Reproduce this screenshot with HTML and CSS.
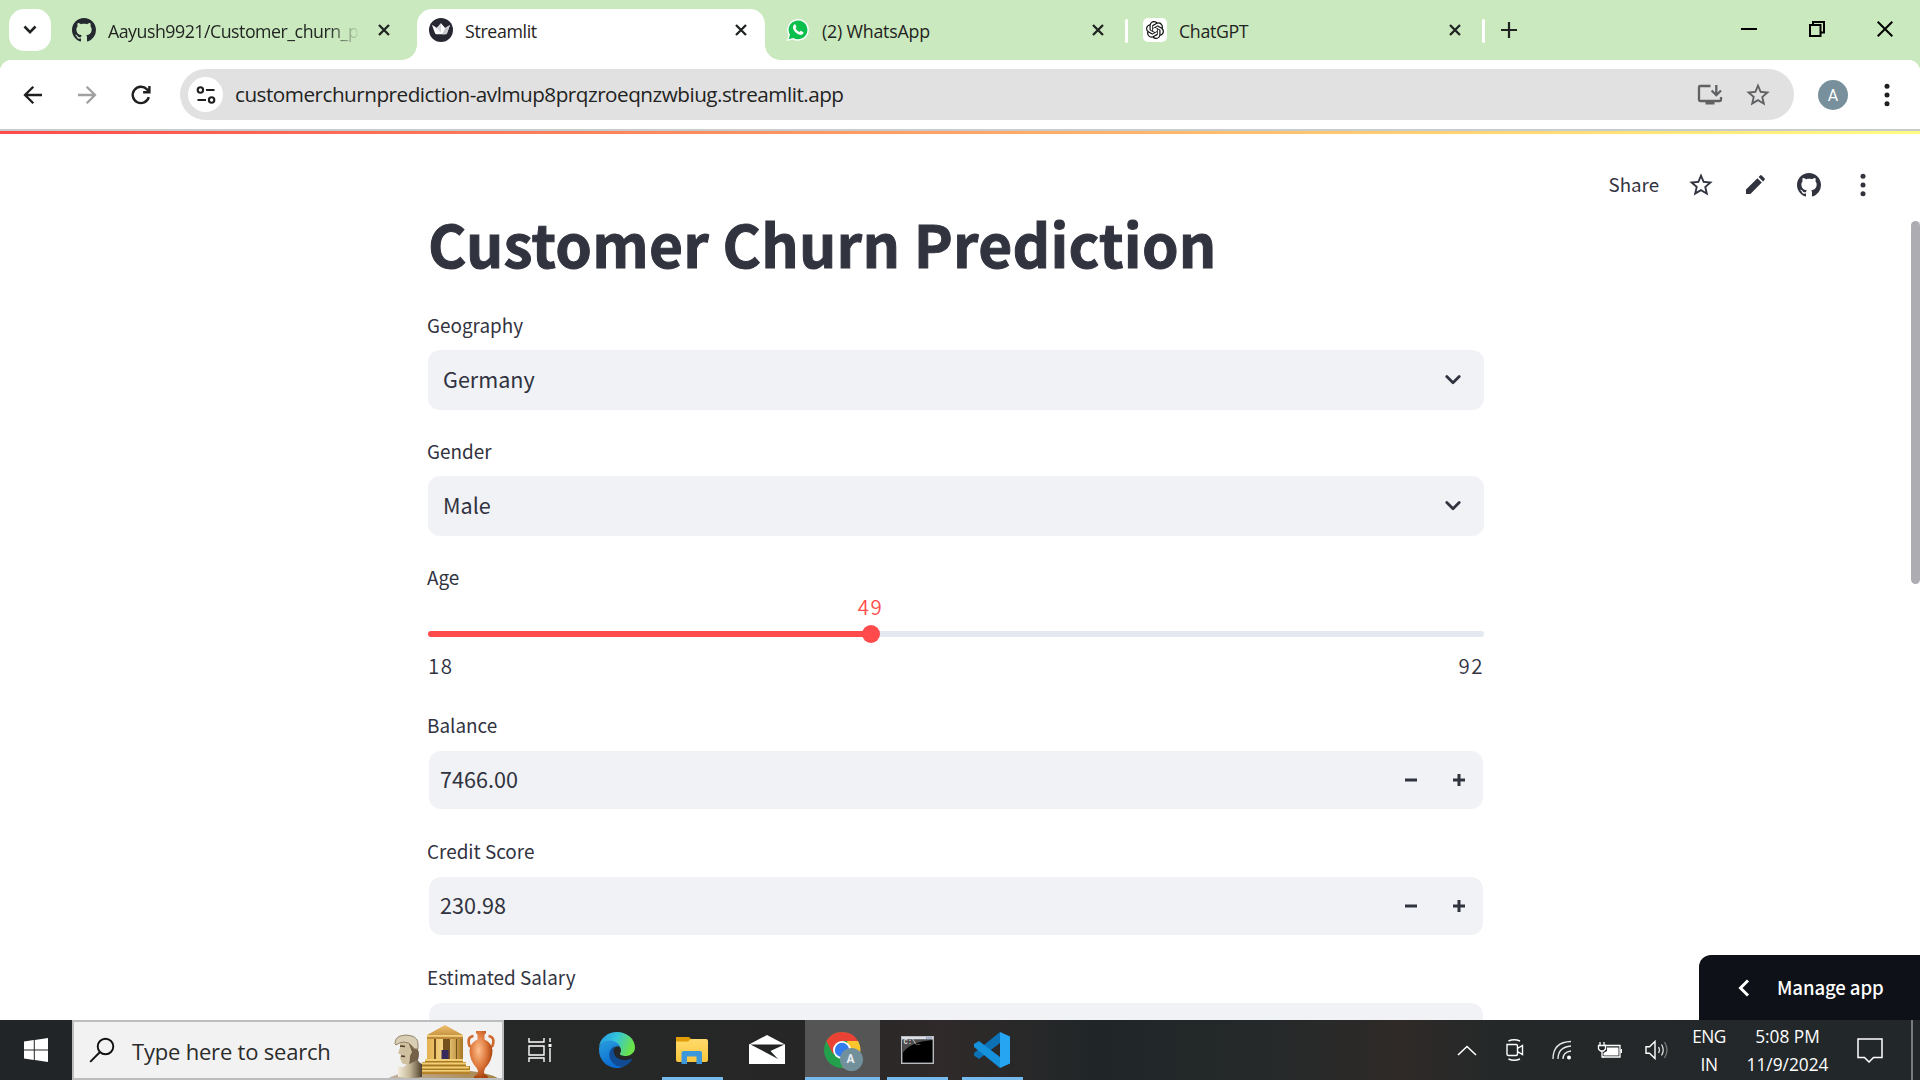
FILE: index.html
```html
<!DOCTYPE html>
<html lang="en">
<head>
<meta charset="utf-8">
<title>Streamlit</title>
<link rel="stylesheet" href="styles.css">
</head>
<body>
<svg class="defs" width="0" height="0">
  <defs>
    <symbol id="github" viewBox="0 0 16 16"><path d="M8 0C3.58 0 0 3.58 0 8c0 3.54 2.29 6.53 5.47 7.59.4.07.55-.17.55-.38 0-.19-.01-.82-.01-1.49-2.01.37-2.53-.49-2.69-.94-.09-.23-.48-.94-.82-1.13-.28-.15-.68-.52-.01-.53.63-.01 1.08.58 1.23.82.72 1.21 1.87.87 2.33.66.07-.52.28-.87.51-1.07-1.78-.2-3.64-.89-3.64-3.95 0-.87.31-1.59.82-2.15-.08-.2-.36-1.02.08-2.12 0 0 .67-.21 2.2.82.64-.18 1.32-.27 2-.27.68 0 1.36.09 2 .27 1.53-1.04 2.2-.82 2.2-.82.44 1.1.16 1.92.08 2.12.51.56.82 1.27.82 2.15 0 3.07-1.87 3.75-3.65 3.95.29.25.54.73.54 1.48 0 1.07-.01 1.93-.01 2.2 0 .21.15.46.55.38A8.013 8.013 0 0016 8c0-4.42-3.58-8-8-8z"/></symbol>
    <symbol id="close" viewBox="0 0 12 12"><path d="M1 1l10 10M11 1L1 11" fill="none" stroke="#1f2321" stroke-width="2.3"/></symbol>
    <symbol id="star" viewBox="0 0 24 24"><path d="M22 9.24l-7.19-.62L12 2 9.19 8.63 2 9.24l5.46 4.73L5.82 21 12 17.27 18.18 21l-1.63-7.03L22 9.24zM12 15.4l-3.76 2.27 1-4.28-3.32-2.88 4.38-.38L12 6.1l1.71 4.04 4.38.38-3.32 2.88 1 4.28L12 15.4z"/></symbol>
    <symbol id="dots" viewBox="0 0 6 24"><circle cx="3" cy="3.2" r="2.5"/><circle cx="3" cy="12" r="2.5"/><circle cx="3" cy="20.8" r="2.5"/></symbol>
    <symbol id="chev" viewBox="0 0 16 10"><path d="M1.8 1.6L8 7.8l6.2-6.2" fill="none" stroke="#31333f" stroke-width="2.8" stroke-linecap="round" stroke-linejoin="round"/></symbol>
  </defs>
</svg>

<div class="tabstrip">
  <div class="tab-search"><svg width="14" height="10" viewBox="0 0 14 10"><path d="M1.5 1.5L7 7.2l5.5-5.7" fill="none" stroke="#1f2321" stroke-width="2.6"/></svg></div>
  <div class="tab tab-github">
    <svg class="fav" fill="#24292f"><use href="#github"/></svg>
    <span class="tab-title faded">Aayush9921/Customer_churn_p</span>
    <svg class="x"><use href="#close"/></svg>
  </div>
  <div class="tab active">
    <svg class="fav" viewBox="0 0 24 24"><circle cx="12" cy="12" r="12" fill="#262730"/><path d="M3 7l4.8 3L12 5.2l4.2 4.8L21 7l-3 8.2q-.4 1-1.500 1h-9q-1.100 0-1.500-1z" fill="#fff"/><path d="M12 5.200l-4.200 4.800 4.200 5z" fill="#d5d5da"/><path d="M3 7l4.800 3 3 6.200z" fill="#ececf0"/><path d="M21 7l-4.800 3-3.200 6.200h3.500q1 0 1.500-1z" fill="#c9c9cf"/></svg>
    <span class="tab-title">Streamlit</span>
    <svg class="x"><use href="#close"/></svg>
  </div>
  <div class="tab">
    <svg class="fav" viewBox="0 0 24 24"><path d="M1 23l1.600-5.900A10.800 10.800 0 1 1 7 21.400z" fill="#fff"/><path d="M2.700 21.300L4 16.800A9.400 9.400 0 1 1 7.300 20z" fill="#0bbf4c"/><path d="M8.300 6.600c.5-.4 1-.3 1.200.2l.9 2c.1.400 0 .6-.8 1.500.9 1.800 2.100 2.900 4 3.700.9-1.200 1.100-1.300 1.500-1.100l2 1c.4.200.4.400.3 1-.3 1.400-1.800 2.100-3.200 1.900-3.800-.6-7-4.100-7.200-7-.1-1.300.4-2.400 1.300-3.200z" fill="#fff"/></svg>
    <span class="tab-title">(2) WhatsApp</span>
    <svg class="x"><use href="#close"/></svg>
  </div>
  <i class="sep"></i>
  <div class="tab tab-gpt">
    <svg class="fav" viewBox="0 0 24 24"><rect width="24" height="24" rx="5" fill="#fff"/><path transform="translate(3 3) scale(.75)" fill="#111" d="M22.2819 9.8211a5.9847 5.9847 0 0 0-.5157-4.9108 6.0462 6.0462 0 0 0-6.5098-2.9A6.0651 6.0651 0 0 0 4.9807 4.1818a5.9847 5.9847 0 0 0-3.9977 2.9 6.0462 6.0462 0 0 0 .7427 7.0966 5.98 5.98 0 0 0 .511 4.9107 6.051 6.051 0 0 0 6.5146 2.9001A5.9847 5.9847 0 0 0 13.2599 24a6.0557 6.0557 0 0 0 5.7718-4.2058 5.9894 5.9894 0 0 0 3.9977-2.9001 6.0557 6.0557 0 0 0-.7475-7.0729zm-9.022 12.6081a4.4755 4.4755 0 0 1-2.8764-1.0408l.1419-.0804 4.7783-2.7582a.7948.7948 0 0 0 .3927-.6813v-6.7369l2.02 1.1686a.071.071 0 0 1 .038.052v5.5826a4.504 4.504 0 0 1-4.4945 4.4944zm-9.6607-4.1254a4.4708 4.4708 0 0 1-.5346-3.0137l.142.0852 4.783 2.7582a.7712.7712 0 0 0 .7806 0l5.8428-3.3685v2.3324a.0804.0804 0 0 1-.0332.0615L9.74 19.9502a4.4992 4.4992 0 0 1-6.1408-1.6464zM2.3408 7.8956a4.485 4.485 0 0 1 2.3655-1.9728V11.6a.7664.7664 0 0 0 .3879.6765l5.8144 3.3543-2.0201 1.1685a.0757.0757 0 0 1-.071 0l-4.8303-2.7865A4.504 4.504 0 0 1 2.3408 7.872zm16.5963 3.8558L13.1038 8.364 15.1192 7.2a.0757.0757 0 0 1 .071 0l4.8303 2.7913a4.4944 4.4944 0 0 1-.6765 8.1042v-5.6772a.79.79 0 0 0-.407-.667zm2.0107-3.0231l-.142-.0852-4.7735-2.7818a.7759.7759 0 0 0-.7854 0L9.409 9.2297V6.8974a.0662.0662 0 0 1 .0284-.0615l4.8303-2.7866a4.4992 4.4992 0 0 1 6.6802 4.66zM8.3065 12.863l-2.02-1.1638a.0804.0804 0 0 1-.038-.0567V6.0742a4.4992 4.4992 0 0 1 7.3757-3.4537l-.142.0805L8.704 5.459a.7948.7948 0 0 0-.3927.6813zm1.0976-2.3654l2.602-1.4998 2.6069 1.4998v2.9994l-2.5974 1.4997-2.6067-1.4997Z"/></svg>
    <span class="tab-title">ChatGPT</span>
    <svg class="x"><use href="#close"/></svg>
  </div>
  <i class="sep"></i>
  <svg class="new-tab" width="16" height="16" viewBox="0 0 16 16"><path d="M8 0v16M0 8h16" stroke="#1f2321" stroke-width="2.200"/></svg>
  <div class="win-controls">
    <svg width="16" height="16" viewBox="0 0 16 16"><path d="M0 8h16" stroke="#000" stroke-width="2"/></svg>
    <svg width="16" height="16" viewBox="0 0 16 16"><path d="M1 4h10.500v11H1zM4 4V1h11v10.500h-3.500" fill="none" stroke="#000" stroke-width="2"/></svg>
    <svg width="16" height="16" viewBox="0 0 16 16"><path d="M.7.700l14.600 14.600M15.300.700L.7 15.300" stroke="#000" stroke-width="2"/></svg>
  </div>
</div>

<div class="toolbar">
  <svg class="nav" width="24" height="24" viewBox="0 0 24 24"><path d="M21 12H4.500M12.300 3.700L4 12l8.300 8.300" fill="none" stroke="#1f1f1f" stroke-width="2.300"/></svg>
  <svg class="nav" width="24" height="24" viewBox="0 0 24 24"><path d="M3 12h16.500M11.700 3.700L20 12l-8.300 8.300" fill="none" stroke="#a0a0a0" stroke-width="2.300"/></svg>
  <svg class="nav" width="24" height="24" viewBox="0 0 24 24"><path d="M19.800 14.200A8.200 8.200 0 1 1 18 6.400L20.300 8.700M20.400 3v6.300h-6.300" fill="none" stroke="#1f1f1f" stroke-width="2.400"/></svg>
  <div class="omnibox">
    <div class="site-info"><svg width="20" height="18" viewBox="0 0 20 18"><g fill="none" stroke="#1f1f1f" stroke-width="2.100"><circle cx="4.400" cy="4" r="2.700"/><path d="M10 4h8.500M1.500 14H10"/><circle cx="15.600" cy="14" r="2.700"/></g></svg></div>
    <span class="url">customerchurnprediction-avlmup8prqzroeqnzwbiug.streamlit.app</span>
    <svg class="install" width="26" height="24" viewBox="0 0 26 24"><path d="M13.500 3H3.200q-1.200 0-1.200 1.200v12.600q0 1.200 1.200 1.200h19.600q1.200 0 1.200-1.200V14" fill="none" stroke="#5f6163" stroke-width="2.300"/><path d="M8.500 18h9v3.500h-9z" fill="#5f6163"/><path d="M19.300 2v9.500M14.600 7.500l4.700 4.700L24 7.500" fill="none" stroke="#5f6163" stroke-width="2.300"/></svg>
    <svg class="bookmark" fill="#5f6163"><use href="#star"/></svg>
  </div>
  <div class="avatar">A</div>
  <svg class="menu" fill="#1f1f1f"><use href="#dots"/></svg>
</div>
<div class="decoration"></div>

<div class="page">
  <div class="app-header">
    <span class="share">Share</span>
    <svg class="h-star" fill="#31333f"><use href="#star"/></svg>
    <svg class="h-pencil" width="22" height="22" viewBox="0 0 22 22" fill="#31333f"><path d="M2 15.600L13.400 4.200l4.400 4.400L6.400 20H2zM14.600 3l1.500-1.500q.8-.8 1.600 0l2.800 2.800q.8.800 0 1.600L19 7.400z"/></svg>
    <svg class="h-github" fill="#31333f"><use href="#github"/></svg>
    <svg class="h-dots" fill="#31333f"><use href="#dots"/></svg>
  </div>
  <main class="form">
    <h1>Customer Churn Prediction</h1>
    <div class="field"><label>Geography</label><div class="select"><span>Germany</span><svg class="chev"><use href="#chev"/></svg></div></div>
    <div class="field"><label>Gender</label><div class="select"><span>Male</span><svg class="chev"><use href="#chev"/></svg></div></div>
    <div class="field slider">
      <label>Age</label>
      <div class="slider-value"><span>49</span></div>
      <div class="track"><i class="fill"></i><i class="thumb"></i></div>
      <div class="range"><span>18</span><span>92</span></div>
    </div>
    <div class="field"><label>Balance</label><div class="number"><span>7466.00</span><svg class="step" viewBox="0 0 12 12"><path d="M0 6h12"/></svg><svg class="step" viewBox="0 0 12 12"><path d="M0 6h12M6 0v12"/></svg></div></div>
    <div class="field"><label>Credit Score</label><div class="number"><span>230.98</span><svg class="step" viewBox="0 0 12 12"><path d="M0 6h12"/></svg><svg class="step" viewBox="0 0 12 12"><path d="M0 6h12M6 0v12"/></svg></div></div>
    <div class="field"><label>Estimated Salary</label><div class="number"></div></div>
  </main>
  <div class="scroll-thumb"></div>
  <div class="manage"><svg width="12" height="18" viewBox="0 0 12 18"><path d="M10 1.500L2.500 9l7.500 7.500" fill="none" stroke="#fff" stroke-width="3"/></svg><span>Manage app</span></div>
</div>

<div class="taskbar">
  <div class="start"><svg width="24" height="24" viewBox="0 0 24 24" fill="#fff"><path d="M0 3.400L9.800 2v9.400H0zM10.800 1.900L24 0v11.400H10.800zM0 12.400h9.800V22L0 20.600zM10.800 12.400H24V24l-13.200-1.900z"/></svg></div>
  <div class="search">
    <svg class="lens" width="26" height="26" viewBox="0 0 26 26"><circle cx="16.500" cy="9.500" r="7.800" fill="none" stroke="#111" stroke-width="1.900"/><path d="M11 15L1.200 24.800" stroke="#111" stroke-width="1.900"/></svg>
    <span>Type here to search</span>
    <svg class="art" width="118" height="56" viewBox="0 0 118 56">
      <defs>
        <linearGradient id="gold" x2="1"><stop offset="0" stop-color="#e2b04f"/><stop offset=".5" stop-color="#f6d88c"/><stop offset="1" stop-color="#a87723"/></linearGradient>
        <linearGradient id="roof" x2="0" y2="1"><stop offset="0" stop-color="#efc06c"/><stop offset="1" stop-color="#b98534"/></linearGradient>
        <linearGradient id="hill" x2="1"><stop offset="0" stop-color="#c5b5a8"/><stop offset="1" stop-color="#a5803f"/></linearGradient>
        <linearGradient id="stone" x2="1"><stop offset="0" stop-color="#f3ecd9"/><stop offset=".5" stop-color="#c3b596"/><stop offset="1" stop-color="#50402e"/></linearGradient>
        <radialGradient id="clay" cx=".4" cy=".4" r=".6"><stop offset="0" stop-color="#ffc090"/><stop offset=".6" stop-color="#dc7538"/><stop offset="1" stop-color="#a8430f"/></radialGradient>
      </defs>
      <path d="M0 56Q14 45 57 44Q106 45 118 56z" fill="url(#hill)"/>
      <path d="M36 45v-4h2v-4h3v-3h38v3h3v4h4v4z" fill="#a87923"/>
      <path d="M41 34h38v2H41zM38 37.500h44v2H38zM36 41.500h49v2H36zM34 45h52v1.800H34z" fill="#f2cf75"/>
      <path d="M34 46.800h52v2.400H34z" fill="#b98429"/>
      <path d="M44 12h34v22H44z" fill="#74501d"/>
      <path d="M43 12h7v22h-7zM52 12h7v22h-7zM66 12h6v22h-6zM73 12h6v22h-6z" fill="url(#gold)"/>
      <path d="M57.500 25h7v9h-7z" fill="#382a5b"/>
      <path d="M61 0L43 10v4h36v-4z" fill="url(#roof)"/><path d="M43 10h36v1.800H43z" fill="#f3ce7b"/>
      <path d="M14 41q7 3 9-3l10-7q0 6 5 8v13q-12 2-24 0z" fill="url(#stone)"/>
      <path d="M16 16h12l5 6v9l-7 6q-4 4-8 1l-2-5 1-3-3-2 2-5z" fill="#cfc0a0"/>
      <path d="M25 19l7-3 2 9q2 3 0 10l-9 4q1-3 1-8l2-4z" fill="#75614a"/>
      <path d="M11 19q0-6 5-8 6-2 12 0 6 2 6 8v5q-4 1-6-3-3-4-8-4-4 0-8 3z" fill="#d9cdb3" stroke="#8c7b5f" stroke-width=".9"/>
      <path d="M16 21l5 .5M17 31l4 .500" stroke="#4d3b27" stroke-width="1.500" fill="none"/>
      <path d="M89.500 11q-7 1-4 10l5 3M104.500 11q7 1 4 10l-5 3" fill="none" stroke="#cf6a31" stroke-width="2.600"/>
      <path d="M92 6h10v2.200l-1.500 1.300v5q7 3 8 11 0 10-7.500 18-1 2-1 5l4 3v2.500H90V51.500l4-3q0-3-1-5-7.500-8-7.500-18 1-8 8-11v-5L92 8.200z" fill="url(#clay)"/>
    </svg>
  </div>
  <div class="task view"><svg width="26" height="26" viewBox="0 0 26 26"><path d="M2 1v4h15V1M2 25v-4h15v4M2 9h15v9H2zM23 1v4M23 11v14" fill="none" stroke="#fff" stroke-width="1.400"/><path d="M21.500 7h3v3h-3z" fill="#fff"/></svg></div>
  <div class="task"><svg width="36" height="36" viewBox="0 0 36 36">
    <defs><linearGradient id="e1" x2="1" y2=".3"><stop offset="0" stop-color="#2493e2"/><stop offset=".5" stop-color="#33c5dd"/><stop offset="1" stop-color="#6be34b"/></linearGradient><linearGradient id="e2" x2=".4" y2="1"><stop offset="0" stop-color="#2a9edf"/><stop offset="1" stop-color="#0a6bd0"/></linearGradient></defs>
    <path d="M0 15C1 6 9 0 18 0c10 0 18 7 18 15.500C36 21 31 24 27 24c-4 0-6.500-1-6-2.500 2.500-3 .5-8-4.500-10.500C10 8 3 9 0 15z" fill="url(#e1)"/>
    <path d="M0 16C2 10 8 7.500 14 9c4 1 6.500 3.500 7.500 6-4-2-8 1-8.500 5-.5 7 5 14 12 14.500-3 1.500-5 1.500-7 1.500C8 36 0 28 0 18z" fill="url(#e2)"/>
    <path d="M16 14c-4 2-6.500 6-5.500 11 1.500 6 8 11 14 9.500 4-1.500 7-4 8.500-7 .4-1-.5-1-1-.7-6 3-14 1-16.500-4-1.500-3-1-6 .5-8.800z" fill="#114b93"/></svg></div>
  <div class="task open"><svg width="34" height="28" viewBox="0 0 34 28"><defs><linearGradient id="fo" x2="0" y2="1"><stop offset="0" stop-color="#ffda6b"/><stop offset="1" stop-color="#f9c63c"/></linearGradient></defs><path d="M1 1h13l2.500 2.500L14 6H1z" fill="#e09d08"/><path d="M1 5.500h12L16 3h15q2 0 2 2v19q0 2-2 2H3q-2 0-2-2z" fill="url(#fo)"/><path d="M6.500 28V17q0-2 2-2h16.500q2 0 2 2v11h-5.500v-7.500h-9.500V28z" fill="#3c98da"/></svg></div>
  <div class="task"><svg width="36" height="30" viewBox="0 0 36 30"><path d="M18 0l18 9.500V29H0V9.500z" fill="#fff"/><path d="M1.500 9.500h34L21.500 16l7.500 8z" fill="#242625"/></svg></div>
  <div class="task open current"><svg width="40" height="40" viewBox="0 0 40 40"><circle cx="18" cy="18" r="18" fill="#22a04b"/><path d="M18 0a18 18 0 0 1 16 9H18L9 22 2.400 9A18 18 0 0 1 18 0z" fill="#ea4335"/><path d="M34 9a18 18 0 0 1-15.500 27L26 22l-3-13z" fill="#fbc62d"/><circle cx="18" cy="18" r="9" fill="#fff"/><circle cx="18" cy="18" r="7.200" fill="#327cf0"/><circle cx="27.500" cy="27.500" r="11.500" fill="#72909c"/></svg><b>A</b></div>
  <div class="task open"><svg class="cmd" width="33" height="28" viewBox="0 0 33 28"><rect x=".7" y=".7" width="31.600" height="26.600" fill="#000" stroke="#b9bcc0" stroke-width="1.400"/><path d="M1 1h31v2.500H1z" fill="#dcdfe5"/><path d="M25 2h6" stroke="#4a69ad" stroke-width="1.200" stroke-dasharray="1.500 .7"/><path d="M1.500 4h30Q9 6 1.500 17z" fill="#4c4c4c"/></svg><em>C:\_</em></div>
  <div class="task open"><svg width="36" height="36" viewBox="0 0 36 36"><path d="M26 0l10 4.500v27L26 36z" fill="#26a5f2"/><path d="M26 0v11L5 27 0 23.500v-2.500z" fill="#0c72b5"/><path d="M5 9L26 25v11L0 15v-3z" fill="#1691dc"/></svg></div>
  <div class="tray">
    <div><svg width="20" height="11" viewBox="0 0 20 11"><path d="M1 10l9-8.500L19 10" fill="none" stroke="#fff" stroke-width="1.600"/></svg></div>
    <div><svg width="18" height="24" viewBox="0 0 18 24"><path d="M2.500 3Q8 .5 14 3M2.500 21q5.500 2.500 11.500 0M1 6.500h9q1.500 0 1.500 1.500v8q0 1.500-1.500 1.500H2.500Q1 17.500 1 16zM11.500 10.500l5-3v9l-5-3z" fill="none" stroke="#fff" stroke-width="1.400"/></svg></div>
    <div><svg width="20" height="20" viewBox="0 0 20 20"><g fill="none" stroke="#e8e8e8" stroke-width="1.300"><path d="M1 19Q1 2 19 1.500M6 19Q6 7 19 6M11 19q0-7 8-8"/></g><circle cx="17" cy="17.500" r="2" fill="#fff"/></svg></div>
    <div><svg width="26" height="18" viewBox="0 0 26 18"><path d="M8 4.500h15V16H6" fill="none" stroke="#fff" stroke-width="1.300"/><path d="M10 6.500h11.500v8H6.500V12l3.500-2zM23.500 8H25v4h-1.500z" fill="#fff"/><path d="M3 1v3M7 1v3M1.500 4.500h7V8L6.500 10h-3L1.500 8zM5 10v6h2" fill="none" stroke="#fff" stroke-width="1.300"/></svg></div>
    <div><svg width="24" height="20" viewBox="0 0 24 20"><path d="M1 6.800h3.500L10 1.500v17L4.500 13.200H1z" fill="none" stroke="#fff" stroke-width="1.400"/><path d="M13.500 7q2 3 0 6M16.500 4.500q3.500 5.500 0 11" fill="none" stroke="#ddd" stroke-width="1.300"/><path d="M19.500 2q5 8 0 16" fill="none" stroke="#777" stroke-width="1.300"/></svg></div>
    <div class="lang"><span>ENG</span><span>IN</span></div>
    <div class="clock"><span>5:08 PM</span><span>11/9/2024</span></div>
    <div class="notif"><svg width="26" height="26" viewBox="0 0 26 26"><path d="M1 2h24v18.500h-8.500L12 25l-4.500-4.500H1z" fill="none" stroke="#fff" stroke-width="1.500"/></svg></div>
    <i class="peek"></i>
  </div>
</div>
</body>
</html>
```
FILE: styles.css
```css
* { box-sizing: border-box; }
body {
  margin: 0;
  width: 1920px;
  height: 1080px;
  overflow: hidden;
  display: flex;
  flex-direction: column;
  background: #fff;
  font-family: "Open Sans", sans-serif;
  color: #1f2321;
}
.defs { position: absolute; }
svg { flex: none; display: block; }

/* tab strip */
.tabstrip {
  height: 60px;
  flex: none;
  display: flex;
  align-items: flex-start;
  background: #cbe9be;
  padding: 9px 0 0 9px;
}
.tab-search {
  width: 42px;
  height: 42px;
  border-radius: 15px;
  background: #fff;
  display: flex;
  align-items: center;
  justify-content: center;
}
.tab {
  width: 348px;
  height: 51px;
  display: flex;
  align-items: center;
  padding: 0 18px 9px 12px;
}
.tab-github { width: 358px; padding-left: 21px; padding-right: 19px; }
.tab.active {
  position: relative;
  margin-left: 8px;
  background: #fff;
  border-radius: 15px 15px 0 0;
}
.tab.active::before, .tab.active::after {
  content: "";
  position: absolute;
  bottom: 0;
  width: 15px;
  height: 15px;
}
.tab.active::before { left: -15px; background: radial-gradient(circle at 0 0, transparent 14.5px, #fff 15px); }
.tab.active::after { right: -15px; background: radial-gradient(circle at 100% 0, transparent 14.5px, #fff 15px); }
.tab.active + .tab { width: 360px; padding-left: 21px; padding-right: 21px; }
.fav { width: 24px; height: 24px; margin-right: 12px; }
.tab-title {
  flex: 1;
  padding-top: 2px;
  font-size: 17.8px;
  line-height: 26px;
  letter-spacing: -.35px;
  white-space: nowrap;
}
.tab.active + .tab .tab-title { letter-spacing: -.2px; }
.tab .faded {
  margin-right: 18px;
  letter-spacing: -.5px;
  -webkit-mask-image: linear-gradient(90deg, #000 calc(100% - 32px), transparent);
  mask-image: linear-gradient(90deg, #000 calc(100% - 32px), transparent);
}
.x { width: 12px; height: 12px; }
.sep { width: 3px; height: 24px; margin-top: 10px; border-radius: 2px; background: #fff; }
.tab-gpt { width: 354px; padding-left: 15px; padding-right: 21px; }
.new-tab { margin: 13px 0 0 16px; }
.win-controls { margin: 12px 27px 0 auto; display: flex; gap: 52px; }

/* toolbar */
.toolbar {
  height: 71px;
  flex: none;
  display: flex;
  align-items: center;
  padding: 0 29px 0 21px;
  border-bottom: 2px solid #c9cccd;
  background: radial-gradient(circle at 12px 12px, #fff 12px, #cbe9be 12.500px) 0 0 / 12px 12px no-repeat,
    radial-gradient(circle at 0 12px, #fff 12px, #cbe9be 12.500px) 100% 0 / 12px 12px no-repeat, #fff;
}
.nav { margin-right: 30px; }
.omnibox {
  width: 1614px;
  height: 51px;
  margin-left: -3px;
  border-radius: 26px;
  background: #e1e1e1;
  display: flex;
  align-items: center;
  padding: 0 22px 0 8px;
}
.site-info {
  width: 35px;
  height: 35px;
  border-radius: 50%;
  background: #fff;
  display: flex;
  align-items: center;
  justify-content: center;
}
.url { flex: 1; margin: 0 0 2px 12px; font-size: 20.700px; letter-spacing: -.5px; line-height: 30px; }
.install { margin-right: 21px; }
.bookmark { width: 28px; height: 28px; }
.avatar {
  width: 30px;
  height: 30px;
  margin-left: 24px;
  border-radius: 50%;
  background: #78909c;
  color: #fff;
  font: 16px/31px Roboto, sans-serif;
  text-align: center;
}
.menu { width: 6px; height: 24px; margin-left: 36px; }
.decoration { height: 3px; flex: none; background: linear-gradient(90deg, #ff4b4b, #fffd80); }

/* app */
.page {
  position: relative;
  height: 886px;
  flex: none;
  overflow: hidden;
  font-family: "Noto Sans CJK SC", "Noto Sans", sans-serif;
  color: #31333f;
}
.app-header {
  height: 80px;
  padding: 22px 54px 0 0;
  display: flex;
  align-items: center;
  justify-content: flex-end;
}
.share { font-size: 18.700px; line-height: 26px; margin: 0 28px 2px 0; }
.h-star { width: 28px; height: 28px; }
.h-pencil { margin: 0 31px 0 29px; }
.h-github { width: 24px; height: 24px; }
.h-dots { width: 6px; height: 24px; margin-left: 39px; }
.form { width: 1056px; margin-left: 428px; }
h1 {
  margin: -1px 0 39px;
  height: 60px;
  font-size: 58.600px;
  line-height: 60px;
  letter-spacing: .25px;
  font-weight: 700;
  -webkit-text-stroke: 1px #31333f;
  white-space: nowrap;
}
.field { margin-bottom: 28px; }
label { display: block; height: 30px; margin-bottom: 8px; font-size: 18.900px; line-height: 26px; text-indent: -1px; }
.select, .number {
  height: 60px;
  display: flex;
  align-items: center;
  border-radius: 12px;
  background: #f0f2f6;
  font-size: 21.600px;
  line-height: 30px;
}
.select { padding: 0 23px 0 15px; }
.select span, .number span { flex: 1; position: relative; top: -1px; }
.chev { width: 16px; height: 10px; }
.number { height: 58px; margin: 9px 1px 29px; padding: 0 18px 0 11px; }
.step { width: 12px; height: 12px; margin-left: 36px; fill: none; stroke: #31333f; stroke-width: 3; }
.slider { height: 120px; display: flex; flex-direction: column; }
.slider label { margin: 0; }
.slider-value, .range { font-size: 20.500px; font-weight: 350; letter-spacing: 1.500px; line-height: 28px; }
.slider-value { height: 39px; margin-top: -2px; width: 885px; text-align: center; color: #ff4b4b; }
.track { position: relative; height: 6px; border-radius: 3px; background: #e4e8f0; display: flex; }
.fill { width: 442px; border-radius: 3px; background: #ff4b4b; }
.thumb { position: absolute; left: 434px; top: -6px; width: 18px; height: 18px; border-radius: 50%; background: #ff4b4b; }
.range { display: flex; justify-content: space-between; margin-top: 14px; }
.scroll-thumb { position: absolute; right: 0; top: 87px; width: 9px; height: 363px; border-radius: 4.500px; background: #adacb3; }
.manage {
  position: absolute;
  right: 0;
  bottom: 0;
  width: 221px;
  height: 65px;
  border-radius: 12px 0 0 0;
  background: #0e1117;
  color: #fff;
  display: flex;
  align-items: center;
  padding-left: 39px;
  font-size: 18.600px;
}
.manage span { margin: 0 0 2px 27px; white-space: nowrap; font-weight: 500; letter-spacing: -.1px; }

/* taskbar */
.taskbar {
  height: 60px;
  flex: none;
  display: flex;
  background: linear-gradient(90deg, #222527 0, #262827 33%, #252625 42%, #302a2a 49%, #2b2929 52%, #202628 57%, #25292a 66%, #2f2a28 73%, #242829 78%, #22272a 100%);
  color: #fff;
}
.start { width: 72px; display: flex; align-items: center; justify-content: center; }
.search {
  width: 432px;
  border: 2px solid #bcbdbe;
  background: #f2f2f2;
  color: #2b2b2b;
  display: flex;
  align-items: center;
  font-size: 22px;
  letter-spacing: -.2px;
  overflow: hidden;
}
.lens { margin: 0 16px 0 15px; }
.search span { flex: 1; white-space: nowrap; padding: 1px 0 0 1px; }
.art { margin: 3px 0 0; align-self: flex-start; }
.task { position: relative; width: 75px; display: flex; align-items: center; justify-content: center; }
.view { width: 75.500px; padding-right: 4px; }
.open::after { content: ""; position: absolute; left: 7px; right: 7px; bottom: 0; height: 3px; background: #76b9ed; }
.current { background: #555; }
.current::after { left: 0; right: 0; }
.current svg { margin: 4px 0 0 3px; }
.current b { position: absolute; left: 42px; top: 30px; font: 700 12px/18px Roboto, sans-serif; color: #e6ecef; }
.task em { position: absolute; left: 24px; top: 18px; font: 700 7px/9px "Liberation Mono", monospace; color: #ddd; }
.tray { margin-left: auto; display: flex; align-items: center; }
.tray > div { width: 47.500px; display: flex; justify-content: center; }
.tray > .lang, .tray > .clock { flex-direction: column; align-items: center; font-size: 17.300px; line-height: 28px; letter-spacing: -.5px; padding-top: 1px; }
.tray > .lang { width: 56px; }
.tray > .clock { width: 101px; letter-spacing: 0; }
.tray > .notif { width: 63px; }
.peek { width: 2px; height: 60px; margin: 0 7px 0 10px; background: #77797a; }
```
